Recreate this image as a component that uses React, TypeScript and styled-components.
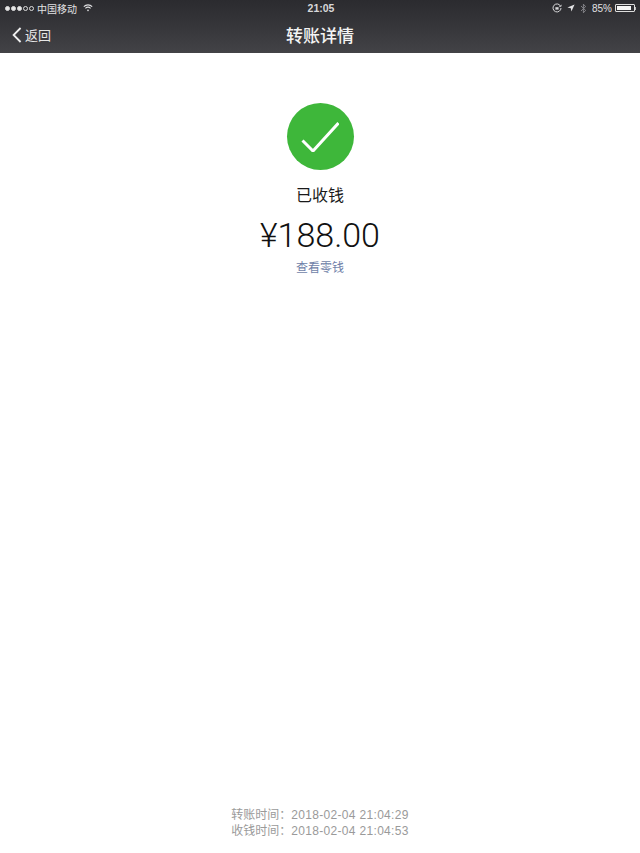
import React from 'react'
import styled, { createGlobalStyle } from 'styled-components'

const CJK_STACK = `"Liberation Sans", "Noto Sans CJK SC", sans-serif`

const GlobalStyle = createGlobalStyle`
  html, body {
    margin: 0;
    padding: 0;
    background: #fff;
    font-family: ${CJK_STACK};
  }
`

const Page = styled.div`
  width: 640px;
  height: 853px;
  display: flex;
  flex-direction: column;
  overflow: hidden;
  background: #fff;
`

const Header = styled.header`
  height: 53px;
  flex: none;
  display: flex;
  flex-direction: column;
  color: #fff;
  background: linear-gradient(180deg, #2b2b2f 0%, #36363a 50%, #434347 100%);
`

const StatusBar = styled.div`
  height: 16px;
  padding: 0 4px 0 5px;
  display: grid;
  grid-template-columns: 1fr auto 1fr;
  align-items: center;
  font-size: 10px;
  color: #e2e2e4;
`

const StatusLeft = styled.div`
  display: flex;
  align-items: center;
  gap: 3px;
`

const StatusRight = styled.div`
  display: flex;
  align-items: center;
  justify-content: flex-end;
  gap: 5px;
`

const Clock = styled.span`
  font-size: 10.5px;
  font-weight: 700;
  color: #d8d8da;
  padding-left: 1px;
`

const Dots = styled.div`
  display: flex;
  gap: 1px;
`

const Dot = styled.i<{ $on?: boolean }>`
  width: 5px;
  height: 5px;
  box-sizing: border-box;
  border-radius: 50%;
  border: 0.6px solid #ddd;
  background: ${({ $on }) => ($on ? '#e8e8e8' : 'transparent')};
`

const Carrier = styled.span`
  margin-right: 3px;
`

const Battery = styled.div`
  display: flex;
  align-items: center;
  gap: 3px;
`

const BatteryShell = styled.div`
  display: flex;
  align-items: center;
`

const BatteryBody = styled.div`
  width: 20px;
  height: 8px;
  box-sizing: border-box;
  padding: 1px;
  border: 0.5px solid #ddd;
  border-radius: 1px;
`

const BatteryFill = styled.div<{ $level: number }>`
  height: 100%;
  width: ${({ $level }) => $level}%;
  background: #f6f6f6;
`

const BatteryTip = styled.div`
  width: 1px;
  height: 3px;
  background: #bbb;
`

const NavBar = styled.nav`
  position: relative;
  flex: 1;
  display: flex;
  align-items: center;
  justify-content: center;
`

const BackLink = styled.a`
  position: absolute;
  left: 12px;
  top: 0;
  bottom: 0;
  display: flex;
  align-items: center;
  gap: 3px;
  font-size: 13px;
  color: #e6e6e6;
`

const Title = styled.h1`
  margin: 0;
  font-size: 17px;
  font-weight: 500;
  color: #f4f4f4;
`

const Content = styled.main`
  flex: 1;
  display: flex;
  flex-direction: column;
  align-items: center;
  padding-top: 50px;
`

const CheckBadge = styled.div`
  width: 67px;
  height: 67px;
  border-radius: 50%;
  background: #3eb73a;
  display: flex;
  align-items: center;
  justify-content: center;
`

const StatusText = styled.div`
  margin-top: 16px;
  font-size: 16px;
  line-height: 20px;
  color: #1a1a1a;
`

const Amount = styled.div`
  margin-top: 10px;
  font-size: 34px;
  line-height: 38px;
  font-weight: 300;
  color: #111;
  font-family: Roboto, "Liberation Sans", sans-serif;
`

const BalanceLink = styled.a`
  margin-top: 6px;
  font-size: 12px;
  line-height: 16px;
  color: #6f7fa8;
`

const Footer = styled.footer`
  flex: none;
  padding-bottom: 14px;
  text-align: center;
  font-size: 12px;
  line-height: 16px;
  color: #9a9a9a;
`

const Stamp = styled.span`
  letter-spacing: 0.32px;
`

export default function App() {
  return (
    <>
      <GlobalStyle />
      <Page>
        <Header>
          <StatusBar>
            <StatusLeft>
              <Dots>
                <Dot $on />
                <Dot $on />
                <Dot $on />
                <Dot />
                <Dot />
              </Dots>
              <Carrier>中国移动</Carrier>
              <svg width="10" height="8" viewBox="0 0 10 8" fill="none" stroke="#e2e2e4" strokeWidth="1.1">
                <path d="M0.8 2.6a6 6 0 0 1 8.4 0" />
                <path d="M2.4 4.3a3.8 3.8 0 0 1 5.2 0" />
                <path d="M5 7.4 3.9 6a1.6 1.6 0 0 1 2.2 0z" fill="#e2e2e4" stroke="none" />
              </svg>
            </StatusLeft>
            <Clock>21:05</Clock>
            <StatusRight>
              <svg width="10" height="10" viewBox="0 0 10 10" fill="none" stroke="#d8d8da" strokeWidth="1">
                <path d="M8.6 3.2A4 4 0 1 0 9 5" />
                <path d="M9.4 1.8 8.8 3.6 7 3.2" strokeWidth="0.8" />
                <rect x="3.4" y="4.2" width="3.2" height="2.4" fill="#d8d8da" stroke="none" />
              </svg>
              <svg width="8" height="8" viewBox="0 0 8 8" fill="#e2e2e4">
                <path d="M7.6 0.4 0.4 3.6 3.8 4.2 4.4 7.6z" />
              </svg>
              <svg width="7" height="11" viewBox="0 0 7 11" fill="none" stroke="#8a8a8e" strokeWidth="0.9">
                <path d="M1 3 5.6 7.4 3.4 9.8V1.2L5.6 3.6 1 8" />
              </svg>
              <Battery>
                <span>85%</span>
                <BatteryShell>
                  <BatteryBody>
                    <BatteryFill $level={85} />
                  </BatteryBody>
                  <BatteryTip />
                </BatteryShell>
              </Battery>
            </StatusRight>
          </StatusBar>
          <NavBar>
            <BackLink>
              <svg width="10" height="16" viewBox="0 0 10 16" fill="none" stroke="#f0f0f0" strokeWidth="1.8">
                <path d="M8.6 1 1.6 8l7 7" />
              </svg>
              返回
            </BackLink>
            <Title>转账详情</Title>
          </NavBar>
        </Header>
        <Content>
          <CheckBadge>
            <svg width="38" height="30" viewBox="0 0 38 30" fill="none" stroke="#fff" strokeWidth="3">
              <path d="M1.5 18.5 12 29 37.5 1" />
            </svg>
          </CheckBadge>
          <StatusText>已收钱</StatusText>
          <Amount>¥188.00</Amount>
          <BalanceLink>查看零钱</BalanceLink>
        </Content>
        <Footer>
          <div>
            转账时间：<Stamp>2018-02-04 21:04:29</Stamp>
          </div>
          <div>
            收钱时间：<Stamp>2018-02-04 21:04:53</Stamp>
          </div>
        </Footer>
      </Page>
    </>
  )
}
